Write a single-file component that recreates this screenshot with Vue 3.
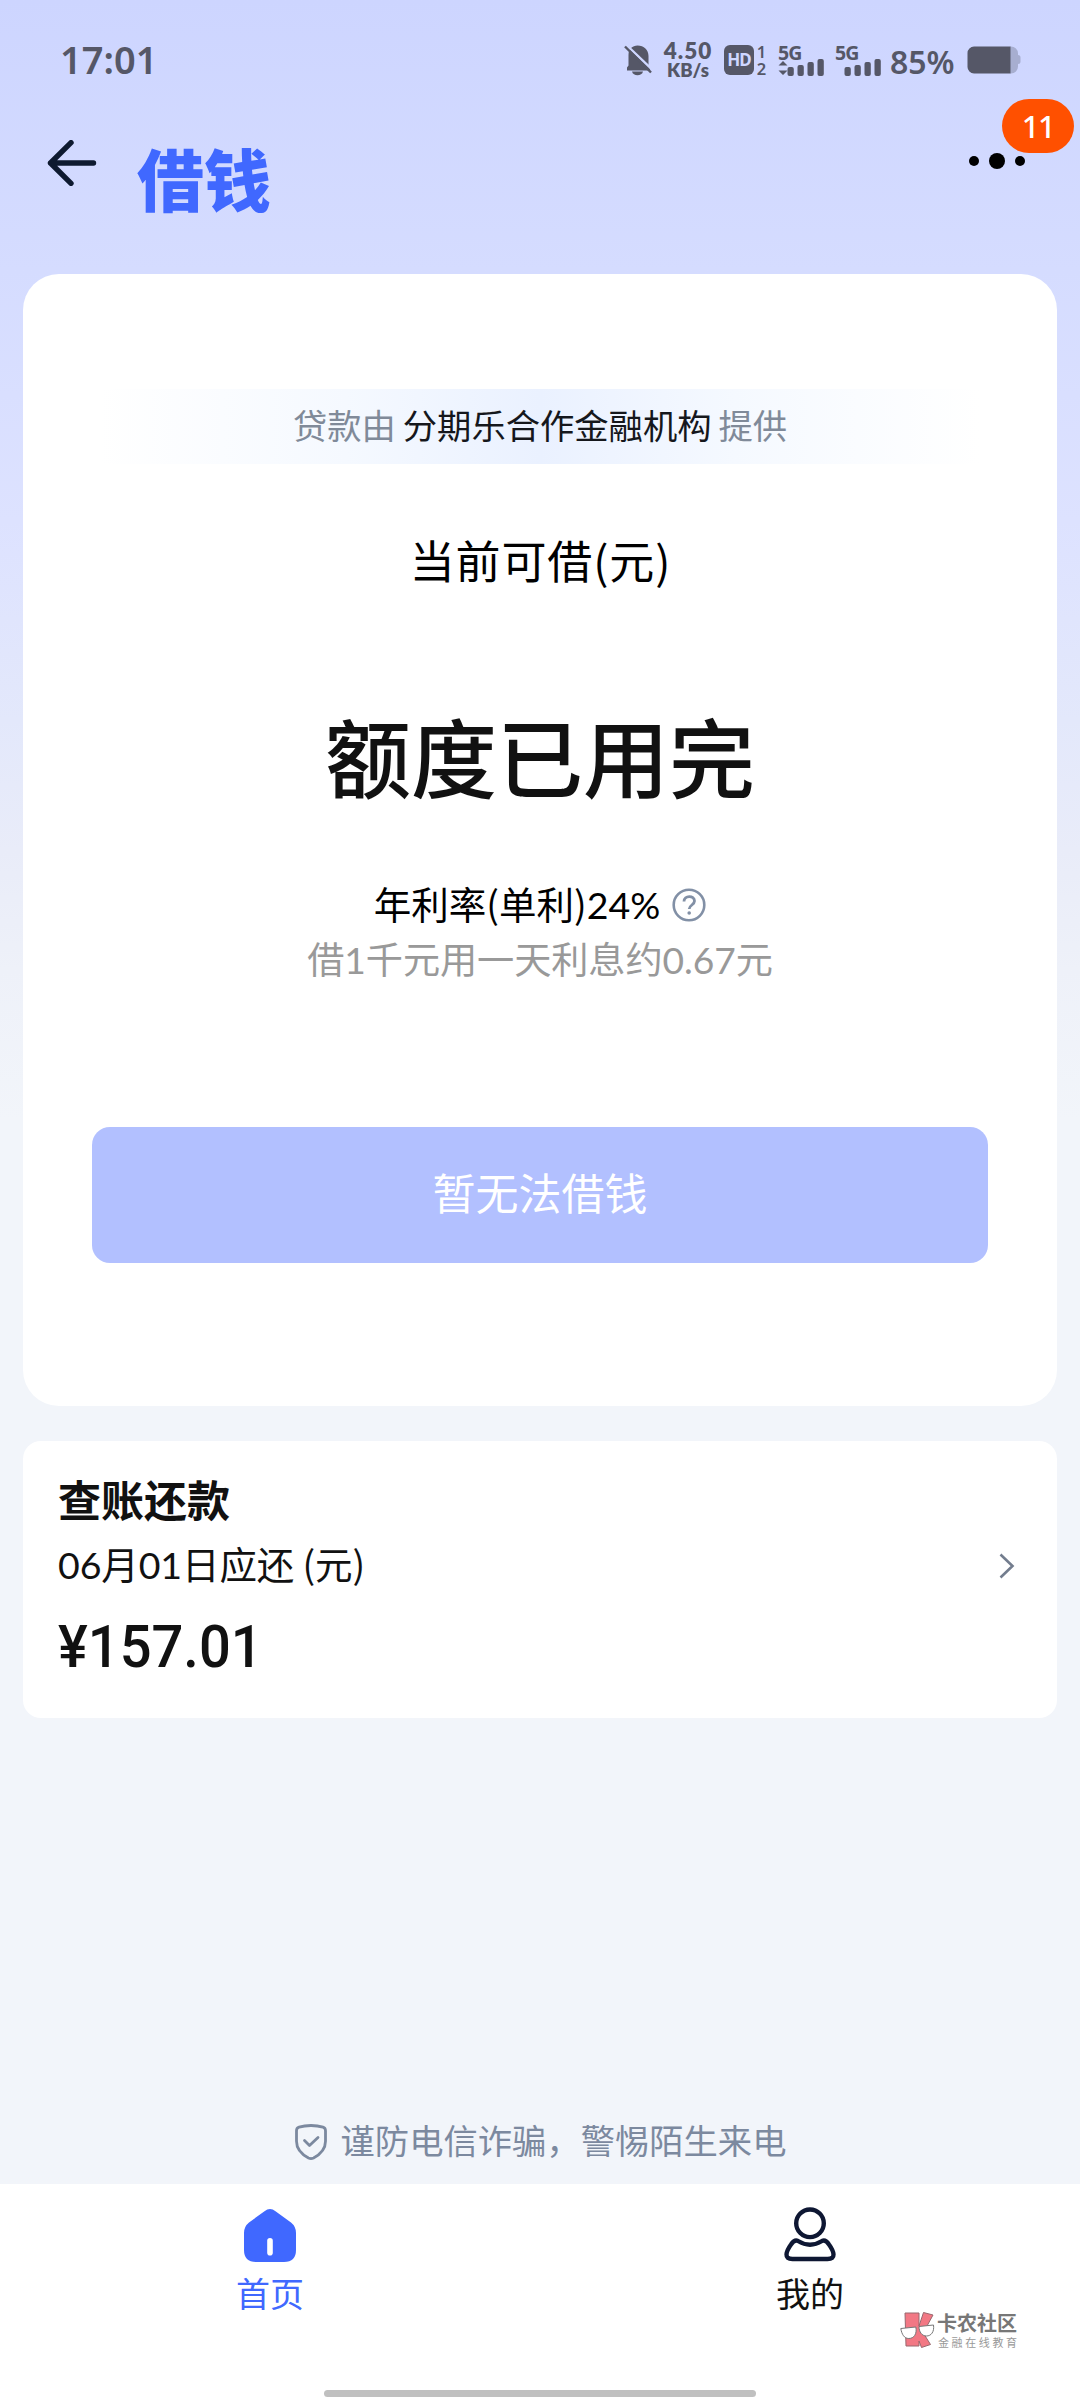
<script setup>
const bars = [
  { x: 0, h: 9 },
  { x: 10, h: 11 },
  { x: 20, h: 14 },
  { x: 30, h: 17 },
]
</script>

<template>
  <div class="page">
    <div class="status">
      <span class="clock">17:01</span>
      <svg class="bell" width="28" height="32" viewBox="0 0 28 32">
        <path d="M3 26.500v-3l1.500-2V11C4.500 5 8.500 1.500 13.500 1.500C20 1.500 24.500 6 24.500 12v9l2 5.500zM8 27.500h11c-1 5-10 5-11 0z" fill="#555767" />
        <path d="M2.500 1l26 25" stroke="#cfd7ff" stroke-width="2.400" />
        <path d="M1 2.500l26 26" stroke="#555767" stroke-width="2.400" />
      </svg>
      <div class="speed"><span class="rate">4.50</span><span class="unit">KB/s</span></div>
      <div class="hd">HD</div>
      <div class="sims"><span>1</span><span>2</span></div>
      <svg class="sig first" width="46" height="40" viewBox="0 -6 46 40">
        <text class="gtext" x="0" y="14.500">5G</text>
        <path d="M.5 20.500l4.500-4.500 4.500 4.500zM.5 25.500l4.500 4.500 4.500-4.500z" fill="#555767" />
        <rect v-for="b in bars" :key="b.x" :x="b.x + 9.500" :y="31 - b.h" width="6.300" :height="b.h" rx="2" fill="#555767" />
      </svg>
      <svg class="sig" width="46" height="40" viewBox="0 -6 46 40">
        <text class="gtext" x="0" y="14.500">5G</text>
        <rect v-for="b in bars" :key="b.x" :x="b.x + 9.500" :y="31 - b.h" width="6.300" :height="b.h" rx="2" fill="#555767" />
      </svg>
      <span class="pct">85%</span>
      <svg class="battery" width="54" height="28" viewBox="0 0 54 28">
        <path d="M43 .5h1a7 7 0 0 1 7 7V9q2.500 0 2.500 2.500v4q0 2.500-2.500 2.500v2.500a7 7 0 0 1-7 7h-1z" fill="#a7aed0" />
        <path d="M43.500 .5v27H7a6.500 6.500 0 0 1-6.500-6.500V7A6.500 6.500 0 0 1 7 .5z" fill="#555767" />
      </svg>
    </div>

    <header class="nav">
      <svg class="back" width="50" height="46" viewBox="0 0 50 46">
        <path d="M24 2.700L3.500 23 24 43.300M3.500 23h43" fill="none" stroke="#0e1a30" stroke-width="5.400" stroke-linecap="round" stroke-linejoin="round" />
      </svg>
      <h1>借钱</h1>
      <div class="more">
        <i class="dot"></i><i class="dot big"></i><i class="dot"></i>
        <span class="badge">11</span>
      </div>
    </header>

    <main>
      <section class="loan">
        <div class="provider">贷款由<b>分期乐合作金融机构</b>提供</div>
        <div class="label">当前可借(元)</div>
        <div class="amount">额度已用完</div>
        <div class="apr">
          <span>年利率(单利)<em>24%</em></span>
          <svg width="34" height="34" viewBox="0 0 34 34" fill="none" stroke="#8290a6">
            <circle cx="17" cy="17" r="15.300" stroke-width="2.600" />
            <path d="M12 13.500c0-6.500 10.500-6.500 10.500-.5 0 4-5.300 4-5.300 8" stroke-width="2.800" />
            <circle cx="17.200" cy="25" r="1.800" fill="#8290a6" stroke="none" />
          </svg>
        </div>
        <div class="daily">借<em>1</em>千元用一天利息约<em>0.67</em>元</div>
        <button class="cta">暂无法借钱</button>
      </section>

      <section class="bill">
        <div class="info">
          <h2>查账还款</h2>
          <p class="due"><em>06</em>月<em>01</em>日应还 (元)</p>
          <p class="sum">¥157.01</p>
        </div>
        <svg class="chev" width="16" height="26" viewBox="0 0 16 26">
          <path d="M1.500 1.500L13.500 13 1.500 24.500" fill="none" stroke="#737d8e" stroke-width="2.600" />
        </svg>
      </section>
    </main>

    <div class="notice">
      <svg width="34" height="38" viewBox="0 0 34 38" fill="none" stroke="#7c899f" stroke-width="2.800" stroke-linejoin="round">
        <path d="M17 2.500c4.500 0 8.500.6 12 1.700q2.500.8 2.500 3.500v10.500c0 8.500-6 13.500-12 16.800q-2.500 1.200-5 0C8.500 31.700 2.500 26.700 2.500 18.200V7.700q0-2.700 2.500-3.500c3.500-1.100 7.500-1.700 12-1.700z" />
        <path d="M10.500 17.500l5 5 8.500-8" stroke-linecap="round" />
      </svg>
      <span>谨防电信诈骗，警惕陌生来电</span>
    </div>

    <nav class="tabs">
      <div class="tab active">
        <svg width="56" height="58" viewBox="0 0 56 58">
          <path d="M22.500 5.200q5.500-4.400 11 0L49 16.500q5 4 5 10.500v17q0 12-12 12H14Q2 56 2 44V27q0-6.500 5-10.500z" fill="#4068ff" />
          <rect x="25.200" y="32" width="5.600" height="17.500" rx="2.800" fill="#fff" />
        </svg>
        <span>首页</span>
      </div>
      <div class="tab">
        <svg width="56" height="58" viewBox="0 0 56 58" fill="none" stroke="#0e1733" stroke-width="4.400" stroke-linejoin="round">
          <circle cx="28" cy="17.300" r="13.800" />
          <path d="M16 35q12 7.500 24 0c3-1.500 5 .5 7 3.500 5 7 7.500 14.500-1.500 14.500h-35c-9 0-6.500-7.500-1.500-14.500 2-3 4-5 7-3.500z" />
        </svg>
        <span>我的</span>
      </div>
      <i class="homebar"></i>
      <div class="mark">
        <svg width="35" height="36" viewBox="0 0 35 36">
          <path d="M5 1h14v13L23.500.5l9.500 2.500-6 11-5 5 8.500 13.500-9 3L19 29v5H6z" fill="#f27884" stroke="#98686f" stroke-width="1" />
          <path d="M.8 16.500l15-1.500c1.500 7-2 11.500-7 11.500-4.500 0-7-4-8-10zM19 14.500l14.500-1.500c1 7-2.500 11-7 11s-7.500-4-7.500-9.500z" fill="#fff" stroke="#777" stroke-width="1" />
        </svg>
        <div class="marktext"><strong>卡农社区</strong><small>金融在线教育</small></div>
      </div>
    </nav>
  </div>
</template>

<style>
body { margin: 0; }
</style>

<style scoped>
.page {
  width: 1080px;
  height: 2400px;
  display: flex;
  flex-direction: column;
  overflow: hidden;
  background: linear-gradient(180deg, #cdd5ff 0, #d5dcff 270px, #dde2ff 520px, #e3e8fb 720px, #e9ecf9 850px, #eef1f9 970px, #f2f5fa 1120px, #f2f5fa 100%);
  font-family: "Noto Sans CJK SC", sans-serif;
  color: #111;
}
h1, h2, p { margin: 0; }
em { font-style: normal; font-family: Lato, sans-serif; }
.status {
  height: 120px;
  flex: none;
  display: flex;
  align-items: center;
  padding-left: 60px;
  color: #555767;
  font-family: "Noto Sans", sans-serif;
  font-weight: 600;
}
.clock { width: 564px; margin-top: -2px; font-size: 38px; }
.bell { flex: none; margin-right: 11px; }
.speed { width: 50px; display: flex; flex-direction: column; align-items: center; font-family: Lato, sans-serif; font-weight: 800; }
.rate { font-size: 22.500px; line-height: 20px; letter-spacing: 1px; }
.unit { font-size: 18.500px; line-height: 19px; }
.hd { width: 30px; height: 30px; margin-left: 11px; border-radius: 6px; background: #555767; color: #cfd7ff; font-size: 17px; font-weight: 700; line-height: 30px; text-align: center; letter-spacing: -1px; }
.sims { width: 11px; margin: 0 11px 0 2px; display: flex; flex-direction: column; align-items: center; font-size: 16.500px; line-height: 17px; }
.sig { flex: none; margin: -2px 10px 0 0; }
.first { margin-right: 11px; }
.gtext { font: 700 19.500px "Noto Sans", sans-serif; fill: #555767; letter-spacing: -.8px; }
.pct { width: 67px; font-size: 32px; font-weight: 600; margin: 3px 10px 0 -1px; }
.battery { flex: none; }

.nav { height: 154px; flex: none; display: flex; align-items: flex-start; padding: 0 55px 0 47px; box-sizing: border-box; }
.back { margin-top: 20px; }
h1 { flex: 1; margin: 7px 0 0 40px; font-size: 67px; line-height: 100px; font-weight: 900; color: #4068ff; }
.more { position: relative; display: flex; align-items: center; gap: 10px; margin-top: 33px; height: 16px; }
.dot { width: 10px; height: 10px; border-radius: 50%; background: #000; }
.big { width: 16px; height: 16px; }
.badge { position: absolute; left: 33px; top: -54px; width: 72px; height: 54px; border-radius: 27px; background: #ff5000; color: #fff; font: 500 31px/54px "Noto Sans", sans-serif; text-align: center; letter-spacing: -1.500px; }

main { display: flex; flex-direction: column; gap: 35px; padding: 0 23px; }
.loan { height: 1132px; box-sizing: border-box; padding-top: 115px; border-radius: 36px; background: #fff; display: flex; flex-direction: column; align-items: center; }
.provider {
  width: 880px; height: 75px; line-height: 71px; text-align: center; font-size: 34.300px; color: #808a99;
  background: linear-gradient(90deg, #fff, #f5f9ff 28%, #eaf1ff 50%, #f5f9ff 72%, #fff);
}
.provider b { font-weight: 400; color: #15171c; margin: 0 7px; }
.label { margin-top: 63px; font-size: 45px; line-height: 66px; letter-spacing: .9px; padding-left: 1px; color: #000; }
.amount { margin-top: 102px; font-size: 86px; line-height: 120px; font-weight: 500; }
.apr { display: flex; align-items: center; gap: 12px; margin-top: 63px; height: 54px; font-size: 37.500px; line-height: 54px; color: #000; }
.apr span { margin-top: -2px; }
.daily { margin-top: -1px; font-size: 37.200px; line-height: 54px; letter-spacing: -.1px; color: #999; }
.cta { width: 896px; height: 136px; flex: none; margin-top: 140px; padding: 0; border: 0; border-radius: 18px; background: #b2c0ff; color: #fff; }
.cta { display: flex; justify-content: center; font: 400 43px/128px "Noto Sans CJK SC", sans-serif; }
.bill { height: 277px; box-sizing: border-box; padding: 0 42px 0 35px; border-radius: 18px; background: #fff; display: flex; justify-content: space-between; align-items: flex-start; }
h2 { margin-top: 26px; font-size: 43px; line-height: 62px; font-weight: 700; }
.due { margin-top: 1px; font-size: 37.500px; line-height: 66px; letter-spacing: -.1px; }
.sum { margin-top: 9px; font: 500 59px/80px Roboto, sans-serif; transform: scaleX(.95); transform-origin: left; }
.chev { margin-top: 112px; }
.notice { flex: 1; display: flex; align-items: flex-end; justify-content: center; gap: 13px; padding-bottom: 20px; color: #7c899f; font-size: 34.300px; line-height: 50px; }
.notice svg { margin-bottom: 3px; }
.tabs { position: relative; height: 216px; flex: none; display: flex; background: #fff; }
.tab { flex: 1; display: flex; flex-direction: column; align-items: center; padding-top: 22px; font-size: 34px; line-height: 50px; }
.tab span { margin-top: 4px; }
.active { color: #4068ff; }
.homebar { position: absolute; left: 324px; bottom: 3px; width: 432px; height: 7px; border-radius: 4px; background: #c0c0c0; }
.mark { position: absolute; left: 900px; top: 128px; display: flex; gap: 2px; }
.marktext { display: flex; flex-direction: column; color: #777; white-space: nowrap; }
.marktext strong { font-size: 20px; line-height: 22px; font-weight: 700; }
.marktext small { font-size: 11px; line-height: 16px; letter-spacing: 2.600px; padding-left: 1px; color: #999; }
</style>
